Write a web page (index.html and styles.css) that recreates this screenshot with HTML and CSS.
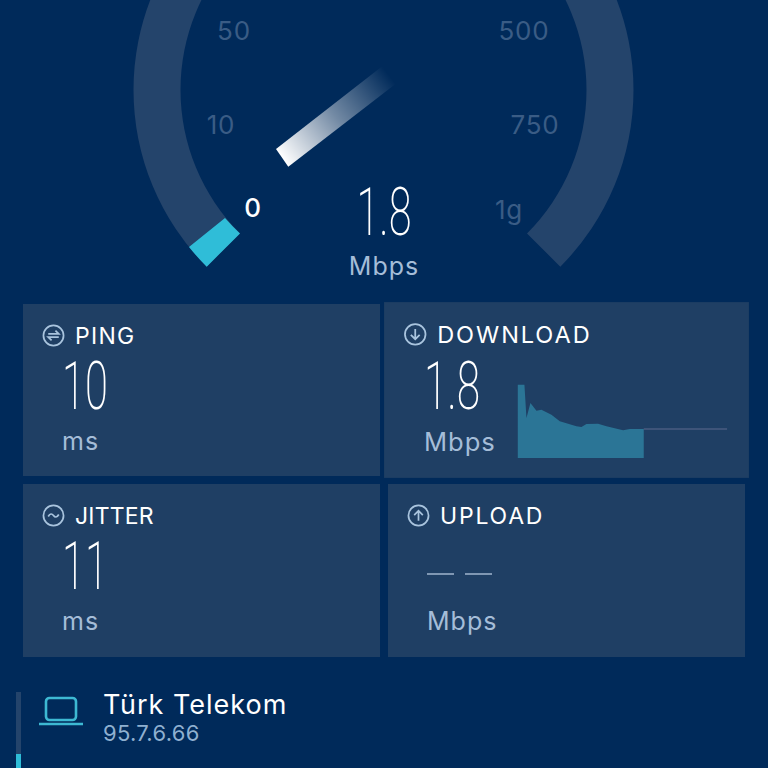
FILE: index.html
```html
<!doctype html>
<html lang="en">
  <head>
    <meta charset="utf-8">
    <meta name="viewport" content="width=device-width, initial-scale=1">
    <title>Speed Test</title>
    <link rel="stylesheet" href="styles.css">
  </head>
  <body>

    <!-- Gauge: arc centre is 383.5,90 -->
    <svg class="gauge" viewBox="0 0 768 304" width="768" height="304">
      <defs>
        <linearGradient id="needleFade" gradientUnits="userSpaceOnUse" x1="282" y1="158" x2="389" y2="75">
          <stop offset="0" stop-color="#fff"></stop>
          <stop offset="0.5" stop-color="#fff" stop-opacity="0.45"></stop>
          <stop offset="1" stop-color="#fff" stop-opacity="0"></stop>
        </linearGradient>
      </defs>
      <path class="gauge-track" d="M206.7 266.7 A250 250 0 1 1 560.3 266.7 L527 233.4 A203 203 0 1 0 240 233.4 Z"></path>
      <path class="gauge-fill" d="M206.7 266.7 A250 250 0 0 1 189 247 L225 218 A203 203 0 0 0 240 233.4 Z"></path>
      <polygon fill="url(#needleFade)" points="276,149 288.3,166.7 395.5,84 382.5,66"></polygon>
      <text class="tick" x="234" y="40">50</text>
      <text class="tick" x="221" y="134">10</text>
      <text class="tick tick-now" x="253" y="217">0</text>
      <text class="tick" x="524" y="40">500</text>
      <text class="tick" x="535" y="134">750</text>
      <text class="tick" x="509" y="219">1g</text>
      <text class="gauge-value" x="384" y="235" textLength="55" lengthAdjust="spacingAndGlyphs">1.8</text>
      <text class="gauge-unit" x="384" y="275">Mbps</text>
    </svg>

    <div class="cards">
      <div class="card">
        <div class="card-title">
          <svg class="card-icon" viewBox="0 0 24 24">
            <circle cx="12" cy="12" r="10.5"></circle>
            <path d="M6.5 10.2 H17.5 L14 6.8 M17.5 13.8 H6.5 L10 17.2"></path>
          </svg>
          PING
        </div>
        <div class="card-body">
          <div class="num"><span class="num-text">10</span></div>
          <div class="unit">ms</div>
        </div>
      </div>

      <div class="card card-active">
        <div class="card-title">
          <svg class="card-icon" viewBox="0 0 24 24">
            <circle cx="12" cy="12" r="10.5"></circle>
            <path d="M12 6.5 V17 M7.5 12.5 L12 17 L16.5 12.5"></path>
          </svg>
          DOWNLOAD
        </div>
        <div class="card-row">
          <div class="card-body">
            <div class="num"><span class="num-text">1.8</span></div>
            <div class="unit">Mbps</div>
          </div>
          <svg class="chart" viewBox="0 0 690 285">
            <path class="chart-rest" d="M402 163 H652"></path>
            <polygon class="chart-area" points="24,250 24,30 44,30 50,130 62,85 80,108 95,105 125,120 150,140 175,147 200,155 215,157 230,148 265,147 290,155 340,167 360,163 402,163 402,250"></polygon>
          </svg>
        </div>
      </div>

      <div class="card">
        <div class="card-title card-title-tight">
          <svg class="card-icon" viewBox="0 0 24 24">
            <circle cx="12" cy="12" r="10.5"></circle>
            <path d="M6.5 13 C8.5 9.5 10.5 10 12 12 C13.5 14 15.5 14.5 17.5 11"></path>
          </svg>
          JITTER
        </div>
        <div class="card-body">
          <div class="num"><span class="num-text">11</span></div>
          <div class="unit">ms</div>
        </div>
      </div>

      <div class="card">
        <div class="card-title card-title-wide">
          <svg class="card-icon" viewBox="0 0 24 24">
            <circle cx="12" cy="12" r="10.5"></circle>
            <path d="M12 17.5 V7 M7.5 11.5 L12 7 L16.5 11.5"></path>
          </svg>
          UPLOAD
        </div>
        <div class="card-body">
          <div class="num num-empty"><span class="dash"></span><span class="dash"></span></div>
          <div class="unit">Mbps</div>
        </div>
      </div>
    </div>

    <div class="provider">
      <div class="provider-bar"><div class="provider-bar-fill"></div></div>
      <svg class="provider-icon" viewBox="0 0 44 30">
        <rect x="7" y="2" width="30" height="22" rx="3.5"></rect>
        <path d="M0 28 H44"></path>
      </svg>
      <div class="provider-text">
        <div class="provider-name">Türk Telekom</div>
        <div class="provider-ip">95.7.6.66</div>
      </div>
    </div>

  </body>
</html>
```

FILE: styles.css
```css
* {
  box-sizing: border-box;
}

body {
  margin: 0;
  height: 768px;
  overflow: hidden;
  background: #002a5a;
  color: #fff;
  font-family: Inter, "Open Sans", sans-serif;
}

/* Gauge */
.gauge {
  display: block;
}
.gauge-track {
  fill: #24446b;
}
.gauge-fill {
  fill: #2fbdd8;
}
.tick {
  font-size: 26px;
  letter-spacing: 0.8px;
  fill: #3a5c85;
  text-anchor: middle;
}
.tick-now {
  fill: #fff;
  font-weight: 500;
}
.gauge-value {
  font-family: Roboto, sans-serif;
  font-weight: 200;
  font-size: 66px;
  fill: #fff;
  text-anchor: middle;
}
.gauge-unit {
  font-size: 25px;
  letter-spacing: 1px;
  fill: #a5bdd8;
  text-anchor: middle;
}

/* Result cards */
.cards {
  display: grid;
  grid-template-columns: minmax(0, 1fr) minmax(0, 1fr);
  grid-template-rows: 172px 173px;
  gap: 8px;
  padding: 0 23px;
}
.card {
  padding: 20px 0 0 19px;
  background: #1f3f64;
}
.card-active {
  transform: scale(1.022);
}
.card-title {
  display: flex;
  align-items: center;
  gap: 10px;
  font-size: 23px;
  line-height: 24px;
  letter-spacing: 1.3px;
}
.card-title-tight {
  letter-spacing: 0.2px;
}
.card-title-wide {
  letter-spacing: 1.8px;
}
.card-active .card-title {
  letter-spacing: 1.9px;
}
.card-icon {
  width: 23px;
  height: 23px;
  margin-top: -2px;
  fill: none;
  stroke: #a9c4de;
  stroke-width: 1.8;
}
.card-row {
  display: flex;
}
.card-body {
  padding-left: 20px;
}
.card-row .card-body {
  flex: none;
  width: 104px;
}
.num {
  height: 58px;
  margin-top: 10px;
  line-height: 58px;
  font-family: Roboto, sans-serif;
  font-weight: 200;
  font-size: 66px;
}
.num-text {
  display: inline-block;
  transform: scaleX(0.63);
  transform-origin: left center;
}
.num-empty {
  display: flex;
  align-items: center;
  gap: 11px;
  padding-top: 14px;
}
.dash {
  width: 27px;
  height: 2px;
  background: #7f97b3;
}
.unit {
  margin-top: 10px;
  font-size: 25px;
  line-height: 30px;
  letter-spacing: 1px;
  color: #a5bdd8;
}
.chart {
  flex: none;
  width: 225px;
  height: 93px;
  margin-top: 27px;
}
.chart-area {
  fill: #2b7596;
}
.chart-rest {
  fill: none;
  stroke: #4a5c80;
  stroke-width: 4;
}

/* Provider */
.provider {
  display: flex;
  margin: 35px 0 0 16px;
  height: 76px;
}
.provider-bar {
  display: flex;
  align-items: flex-end;
  width: 5px;
  background: #24446b;
}
.provider-bar-fill {
  width: 100%;
  height: 14px;
  background: #2fbdd8;
}
.provider-icon {
  width: 44px;
  height: 30px;
  margin: 4px 0 0 18px;
  fill: none;
  stroke: #3db9d3;
  stroke-width: 2.6;
}
.provider-text {
  margin-left: 20px;
}
.provider-name {
  font-size: 27px;
  line-height: 28px;
  letter-spacing: 1px;
  margin-top: -1px;
}
.provider-ip {
  font-size: 22px;
  line-height: 28px;
  letter-spacing: 0.3px;
  color: #8fb0d0;
}
```
